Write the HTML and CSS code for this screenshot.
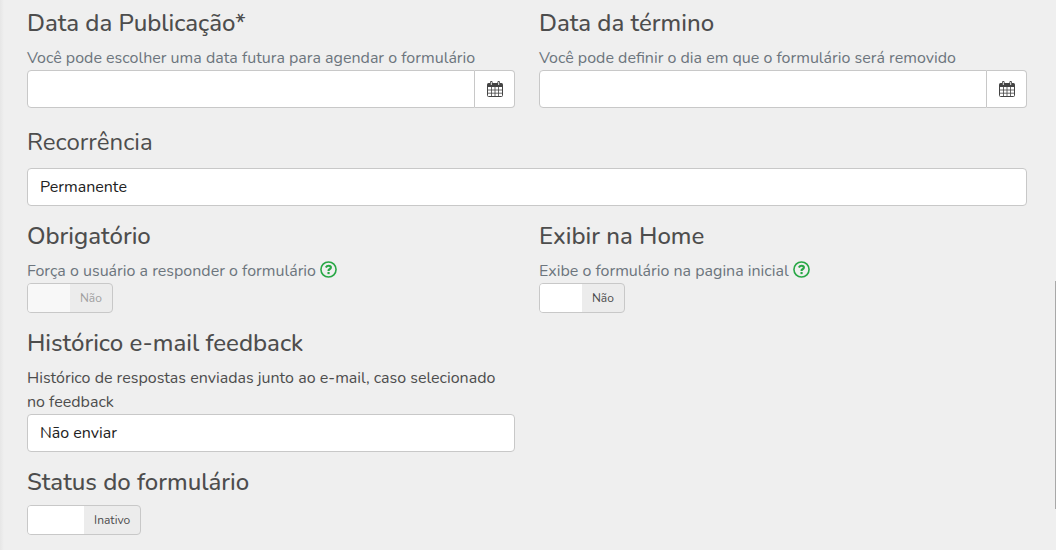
FILE: index.html
```html
<!DOCTYPE html>
<html lang="pt-BR">
<head>
<meta charset="utf-8">
<meta name="viewport" content="width=device-width, initial-scale=1">
<title>Formulário</title>
<link rel="stylesheet" href="styles.css">
</head>
<body>
<svg class="sprite" aria-hidden="true">
  <symbol id="calendar" viewBox="0 0 16 16">
    <path d="M1.500 2h13q1.500 0 1.500 1.500V6H0V3.500Q0 2 1.500 2z" fill="currentColor"/>
    <path d="M.5 5v9.500q0 1 1 1h13q1 0 1-1V5" fill="none" stroke="currentColor"/>
    <path d="M4.500 6v9M8 6v9M11.500 6v9M1 9h14M1 12.200h14" fill="none" stroke="currentColor" stroke-width=".8"/>
    <path d="M3 1.200q0-1.200 1.300-1.200t1.300 1.200v2.300H3zM10.400 1.200q0-1.200 1.300-1.200T13 1.200v2.300h-2.600z" fill="currentColor"/>
    <path d="M4.300 1v3M11.700 1v3" stroke="#fff" stroke-width=".9"/>
  </symbol>
  <symbol id="question" viewBox="0 0 18 18">
    <circle cx="9" cy="9" r="8" fill="none" stroke="currentColor" stroke-width="1.700"/>
    <path d="M6.200 6.800Q7.200 5 9.100 5q2.400 0 2.400 1.900 0 1.100-1.400 1.900Q9 9.400 9 10.500" fill="none" stroke="currentColor" stroke-width="2.300"/>
    <path d="M7.900 11.600h2.300v2.300H7.900z" fill="currentColor"/>
  </symbol>
</svg>
<form class="page">
  <div class="row">
    <div class="field">
      <label class="title" for="start">Data da Publicação*</label>
      <p class="hint">Você pode escolher uma data futura para agendar o formulário</p>
      <div class="group">
        <input class="control" id="start" type="text">
        <button class="addon" type="button" aria-label="Abrir calendário"><svg class="calendar"><use href="#calendar"/></svg></button>
      </div>
    </div>
    <div class="field">
      <label class="title" for="end">Data da término</label>
      <p class="hint">Você pode definir o dia em que o formulário será removido</p>
      <div class="group">
        <input class="control" id="end" type="text">
        <button class="addon" type="button" aria-label="Abrir calendário"><svg class="calendar"><use href="#calendar"/></svg></button>
      </div>
    </div>
  </div>
  <div class="field spaced">
    <label class="title" for="recurrence">Recorrência</label>
    <select class="control" id="recurrence"><option>Permanente</option></select>
  </div>
  <div class="row">
    <div class="field">
      <label class="title" for="required">Obrigatório</label>
      <p class="hint">Força o usuário a responder o formulário <svg class="question"><use href="#question"/></svg></p>
      <label class="toggle"><input class="check" id="required" type="checkbox" disabled><span class="handle"></span><span class="state">Não</span></label>
    </div>
    <div class="field">
      <label class="title" for="home">Exibir na Home</label>
      <p class="hint">Exibe o formulário na pagina inicial <svg class="question"><use href="#question"/></svg></p>
      <label class="toggle"><input class="check" id="home" type="checkbox"><span class="handle"></span><span class="state">Não</span></label>
    </div>
  </div>
  <div class="row">
    <div class="field">
      <label class="title" for="history">Histórico e-mail feedback</label>
      <p class="hint dark">Histórico de respostas enviadas junto ao e-mail, caso selecionado no feedback</p>
      <select class="control" id="history"><option>Não enviar</option></select>
    </div>
  </div>
  <div class="field">
    <label class="title" for="status">Status do formulário</label>
    <label class="toggle"><input class="check" id="status" type="checkbox"><span class="handle"></span><span class="state">Inativo</span></label>
  </div>
</form>
<div class="scrollbar"></div>
</body>
</html>
```
FILE: styles.css
```css
* { box-sizing: border-box; }
body {
  margin: 0;
  background: #efefef;
  color: #4d4d4d;
  font: 16px/24px Nunito, Lato, sans-serif;
}
.sprite { display: none; }
.page {
  display: flex;
  flex-direction: column;
  gap: 16px;
  padding: 9px 29px 16px 27px;
  background: linear-gradient(to right, #e6e6e6, #efefef 4px);
}
.row {
  display: grid;
  grid-template-columns: 1fr 1fr;
  gap: 24px;
}
.field { min-width: 0; }
.title {
  display: block;
  margin-bottom: 8px;
  font-size: 24px;
  font-weight: 500;
  line-height: 29px;
}
.spaced { padding-top: 4px; }
.spaced .title {
  margin-bottom: 11px;
  font-weight: 400;
}
.hint { margin: 0; color: #6c757d; }
.dark { color: #4d4d4d; }
.group { display: flex; }
.control {
  display: block;
  appearance: none;
  width: 100%;
  height: 38px;
  padding: 0 12px;
  border: 1px solid #c8c8c8;
  border-radius: 4px;
  background: #fff;
  color: #222;
  font: inherit;
}
.group .control {
  flex: 1;
  min-width: 0;
  border-radius: 4px 0 0 4px;
}
.addon {
  display: flex;
  align-items: center;
  justify-content: center;
  width: 40px;
  padding: 0;
  border: 1px solid #c8c8c8;
  border-left: 0;
  border-radius: 0 4px 4px 0;
  background: #fff;
  color: #444;
}
.calendar { width: 16px; height: 16px; }
.question {
  width: 17px;
  height: 17px;
  color: #28a745;
  vertical-align: -2px;
}
.toggle {
  display: grid;
  grid-template-columns: 1fr 1fr;
  width: max-content;
  height: 30px;
  border: 1px solid #c8c8c8;
  border-radius: 4px;
  background: #ececec;
  overflow: hidden;
  position: relative;
  font-size: 12px;
  line-height: 28px;
}
.check {
  position: absolute;
  inset: 0;
  margin: 0;
  opacity: 0;
}
.handle { background: #fff; }
.state { padding: 0 10px; }
.toggle:has(:disabled) .handle { background: #f8f8f8; }
.toggle:has(:disabled) .state { color: #a0a0a0; }
.scrollbar {
  position: fixed;
  top: 281px;
  right: 0;
  width: 1px;
  height: 228px;
  background: #a8a8a8;
}
```
